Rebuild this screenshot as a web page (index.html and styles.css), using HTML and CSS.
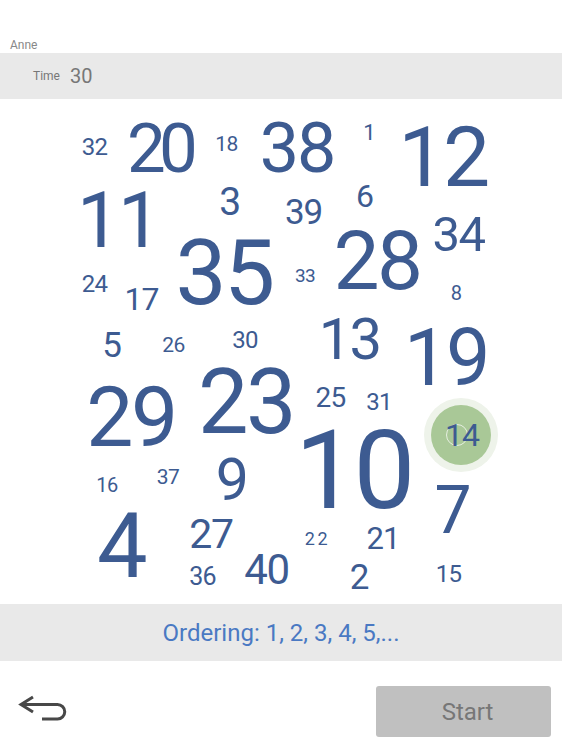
FILE: index.html
```html
<!DOCTYPE html>
<html lang="en">
<head>
    <meta charset="UTF-8">
    <meta name="viewport" content="width=device-width, initial-scale=1.0">
    <title>Number Hunt</title>
    <link rel="stylesheet" href="styles.css">
</head>
<body>
    <div class="screen">
        <div class="player">Anne</div>
        <div class="timer">
            <span class="timer-label">Time</span>
            <span class="timer-value">30</span>
        </div>

        <div class="board" id="board">
            <div class="touch" style="left: 461px; top: 336px;"><span class="ring"></span></div>
        </div>

        <div class="ordering">Ordering: 1, 2, 3, 4, 5,...</div>

        <div class="footer">
            <button class="back" aria-label="Back">
                <svg width="50" height="30" viewBox="0 0 50 30">
                    <path d="M15 3 L3 10.5 L15 18 M3 10.5 H39.5 A7.25 7.25 0 0 1 39.5 25 H24" fill="none" stroke="#484848" stroke-width="3"/>
                </svg>
            </button>
            <button class="start">Start</button>
        </div>
    </div>
    <script>
        // number, ink centre x, ink top y (page coords), font size
        var numbers = [
            [32, 94.5, 138, 24], [20, 159, 123, 69], [18, 226.5, 137, 21], [38, 297, 122, 70],
            [1, 369, 125, 22], [12, 443, 127, 84], [11, 118, 193, 77], [3, 229.5, 188, 39],
            [39, 303.5, 200, 35], [6, 364.5, 184, 32], [34, 458.5, 216, 49], [35, 224, 240, 91],
            [28, 377, 231, 82], [33, 305, 268, 19], [24, 94.5, 275, 24], [17, 141.5, 287, 32],
            [8, 456, 286, 20], [5, 111.5, 333, 35], [26, 173.5, 338, 21], [30, 245, 331, 24],
            [13, 349.5, 318, 58], [19, 446, 329, 79], [29, 131, 387, 84], [23, 246, 370, 90],
            [25, 330.5, 388, 28], [31, 379, 393, 24], [14, 462, 423, 32], [10, 353.5, 430, 110],
            [16, 107, 478, 20], [37, 168, 470, 21], [9, 231.5, 458, 59], [7, 452, 487, 66],
            [4, 121, 514, 90], [27, 211, 519, 41], [22, 317.5, 532, 18], [21, 383, 527, 31],
            [36, 202.5, 567, 25], [40, 266.5, 555, 42], [2, 359, 565, 35], [15, 448.5, 565, 24]
        ];
        var boardTop = 99;
        var board = document.getElementById('board');

        numbers.forEach(function (n) {
            var el = document.createElement('span');
            el.className = 'num';
            if (n[0] == 20) el.className += ' tight';
            if (n[0] == 22) el.className += ' wide';
            el.textContent = n[0];
            el.style.left = n[1] + 'px';
            el.style.top = (n[2] - boardTop - 0.131 * n[3]) + 'px';
            el.style.fontSize = n[3] + 'px';
            board.appendChild(el);
        });
    </script>
</body>
</html>
```

FILE: styles.css
```css
body {
    margin: 0;
    background: #fff;
    font-family: Roboto, "Noto Sans", sans-serif;
}
.screen {
    width: 563px;
    height: 750px;
    overflow: hidden;
}
.player {
    height: 53px;
    box-sizing: border-box;
    padding: 38px 0 0 10px;
    font-size: 12px;
    line-height: 14px;
    color: #888;
}
.timer {
    height: 46px;
    width: 562px;
    background: #e9e9e9;
    display: flex;
    align-items: center;
    padding-left: 33px;
    box-sizing: border-box;
    color: #777;
}
.timer-label {
    font-size: 12px;
    margin-right: 10px;
}
.timer-value {
    font-size: 20px;
}
.board {
    position: relative;
    height: 505px;
}
.num {
    position: absolute;
    transform: translateX(-50%);
    line-height: 1;
    white-space: nowrap;
    letter-spacing: -0.03em;
    color: #3d5b91;
}
.tight {
    letter-spacing: -0.1em;
}
.wide {
    letter-spacing: 0.15em;
}
.touch {
    position: absolute;
    width: 60px;
    height: 60px;
    margin: -30px 0 0 -30px;
    border-radius: 50%;
    background: #a9c897;
    box-shadow: 0 0 0 7px #eef3ea;
}
.ring {
    position: absolute;
    left: 15px;
    top: 19px;
    width: 20px;
    height: 20px;
    border-radius: 50%;
    border: 1.5px solid rgba(255, 255, 255, 0.7);
}
.ordering {
    height: 57px;
    width: 562px;
    background: #e9e9e9;
    display: flex;
    align-items: center;
    justify-content: center;
    font-size: 24px;
    color: #4a79c3;
}
.footer {
    display: flex;
    justify-content: space-between;
    align-items: flex-start;
    padding: 25px 12px 0 18px;
}
.back {
    border: none;
    background: none;
    padding: 0;
    margin-top: 8px;
}
.back svg {
    display: block;
}
.start {
    width: 175px;
    height: 51px;
    border: none;
    border-radius: 3px;
    background: #c0c0c0;
    color: #777;
    padding: 0 0 0 8px;
    font-family: Roboto, sans-serif;
    font-size: 24px;
}
```
